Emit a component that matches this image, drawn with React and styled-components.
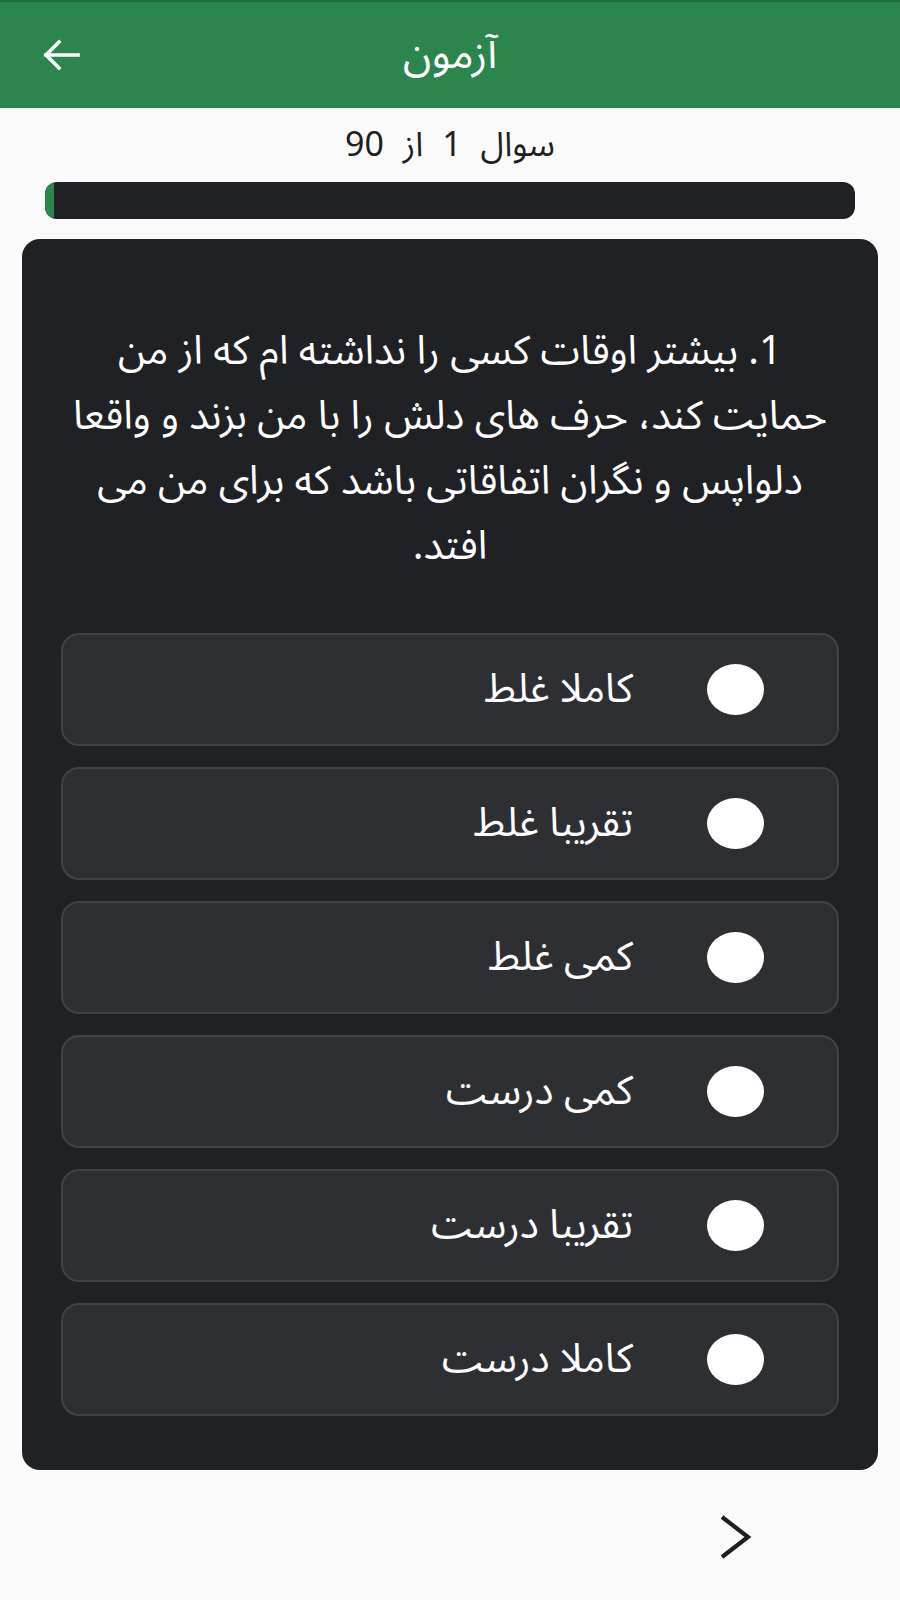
import React from "react";
import styled, { createGlobalStyle } from "styled-components";

const Global = createGlobalStyle`
  html, body { margin: 0; padding: 0; background: #fafafa; }
  body { font-family: "Noto Sans Arabic", "DejaVu Sans", "Noto Sans", sans-serif; }
  * { box-sizing: border-box; }
`;

const Page = styled.div`
  width: 900px;
  min-height: 1600px;
  background: #fafafa;
  display: flex;
  flex-direction: column;
`;

const Header = styled.header`
  height: 108px;
  background: #2b864c;
  border-top: 2px solid #226f3d;
  display: flex;
  align-items: center;
  padding: 0 42px;
`;

const BackButton = styled.button`
  background: none;
  border: none;
  padding: 0;
  width: 38px;
  height: 32px;
  display: flex;
  align-items: center;
  justify-content: center;
  cursor: pointer;
`;

const Title = styled.h1`
  flex: 1;
  margin: 0 38px 0 0;
  text-align: center;
  color: #ffffff;
  font-size: 42px;
  font-weight: 400;
  line-height: 50px;
  direction: rtl;
`;

const Counter = styled.div`
  margin-top: 14px;
  text-align: center;
  direction: rtl;
  font-size: 34px;
  color: #1f1f1f;
  line-height: 46px;
  word-spacing: 10px;
`;

const Track = styled.div`
  margin: 14px 45px 0;
  height: 37px;
  border-radius: 12px;
  background: #202124;
  overflow: hidden;
  display: flex;
`;

const Fill = styled.div`
  background: #2b864c;
  height: 100%;
`;

const Card = styled.section`
  margin: 20px 22px 0;
  background: #202124;
  border-radius: 18px;
  padding: 80px 39px 54px;
  display: flex;
  flex-direction: column;
`;

const Question = styled.p`
  margin: 0 8px 54px;
  direction: rtl;
  text-align: center;
  color: #ffffff;
  font-size: 40px;
  line-height: 65px;
`;

const Options = styled.div`
  display: flex;
  flex-direction: column;
  gap: 21px;
`;

const Option = styled.label`
  height: 113px;
  border-radius: 18px;
  background: #2e2f33;
  border: 2px solid #404246;
  direction: rtl;
  display: flex;
  align-items: center;
  padding-right: 73px;
  gap: 74px;
  cursor: pointer;
`;

const Radio = styled.span`
  width: 57px;
  height: 51px;
  border-radius: 50%;
  background: #ffffff;
  flex-shrink: 0;
`;

const OptionText = styled.span`
  color: #ffffff;
  font-size: 40px;
  line-height: 50px;
`;

const Footer = styled.div`
  display: flex;
  justify-content: flex-end;
  padding: 44px 148px 0 0;
`;

const NextButton = styled.button`
  background: none;
  border: none;
  padding: 0;
  width: 34px;
  height: 46px;
  cursor: pointer;
`;

const options = [
  "کاملا غلط",
  "تقریبا غلط",
  "کمی غلط",
  "کمی درست",
  "تقریبا درست",
  "کاملا درست",
];

export default function App() {
  return (
    <Page>
      <Global />
      <Header>
        <BackButton aria-label="back">
          <svg width="38" height="32" viewBox="0 0 38 32" fill="none">
            <path d="M36 16H4M17 3L4 16l13 13" stroke="#fff" strokeWidth="3.6" strokeLinecap="square" />
          </svg>
        </BackButton>
        <Title>آزمون</Title>
      </Header>
      <Counter>سوال  1  از 90</Counter>
      <Track>
        <Fill style={{ width: `${(1 / 90) * 100}%` }} />
      </Track>
      <Card>
        <Question>
          1. بیشتر اوقات کسی را نداشته ام که از من حمایت کند، حرف های دلش را با من بزند و واقعا دلواپس و نگران اتفاقاتی باشد که برای من می افتد.
        </Question>
        <Options>
          {options.map((o) => (
            <Option key={o}>
              <Radio />
              <OptionText>{o}</OptionText>
            </Option>
          ))}
        </Options>
      </Card>
      <Footer>
        <NextButton aria-label="next">
          <svg width="34" height="46" viewBox="0 0 34 46" fill="none">
            <path d="M4 3l26 20L4 43" stroke="#1f1f1f" strokeWidth="4.2" />
          </svg>
        </NextButton>
      </Footer>
    </Page>
  );
}
